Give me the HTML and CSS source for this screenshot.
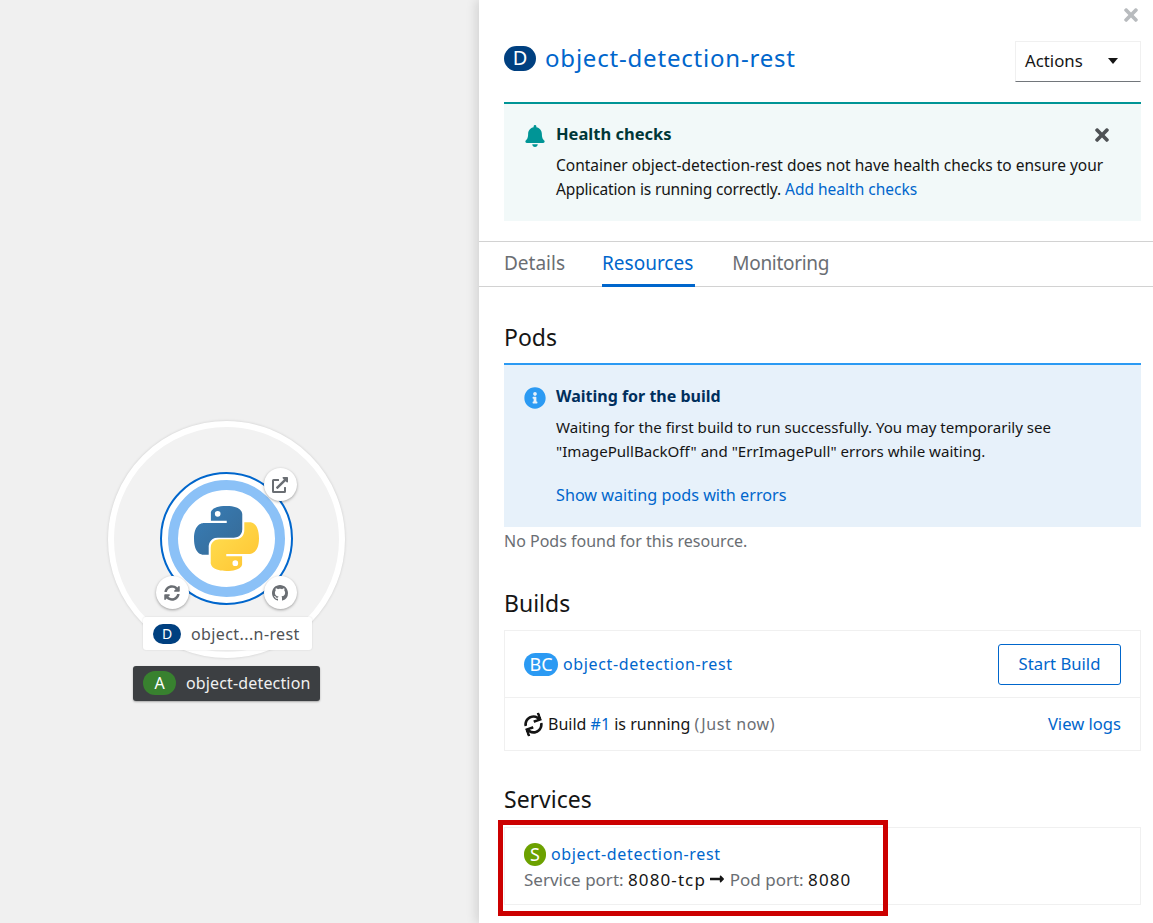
FILE: index.html
```html
<!DOCTYPE html>
<html lang="en">
<head>
    <meta charset="UTF-8">
    <title>object-detection-rest</title>
    <link rel="stylesheet" href="styles.css">
</head>
<body>
    <svg class="defs" width="0" height="0">
        <defs>
            <linearGradient id="pyBlue" x1="0" y1="0" x2="1" y2="1">
                <stop offset="0" stop-color="#387eb8"/>
                <stop offset="1" stop-color="#366994"/>
            </linearGradient>
            <linearGradient id="pyYellow" x1="1" y1="1" x2="0" y2="0">
                <stop offset="0" stop-color="#ffe052"/>
                <stop offset="1" stop-color="#ffc331"/>
            </linearGradient>
        </defs>
    </svg>

    <div class="canvas">
        <div class="group-ring"></div>
        <div class="node-ring"></div>
        <div class="node-inner">
            <svg class="python" viewBox="0 0 110 110">
                <path fill="url(#pyBlue)" d="M54.9 0C26.8 0 28.6 12.2 28.6 12.2l0 12.6h26.8v3.8H17.9S0 26.6 0 55c0 28.4 15.6 27.4 15.6 27.4h9.3V69.2s-.5-15.6 15.4-15.6h26.5s14.9.2 14.9-14.4V15S84 0 54.9 0zM40.1 8.5a4.8 4.8 0 110 9.6 4.8 4.8 0 010-9.6z"/>
                <path fill="url(#pyYellow)" transform="rotate(180 55 55)" d="M54.9 0C26.8 0 28.6 12.2 28.6 12.2l0 12.6h26.8v3.8H17.9S0 26.6 0 55c0 28.4 15.6 27.4 15.6 27.4h9.3V69.2s-.5-15.6 15.4-15.6h26.5s14.9.2 14.9-14.4V15S84 0 54.9 0zM40.1 8.5a4.8 4.8 0 110 9.6 4.8 4.8 0 010-9.6z"/>
            </svg>
        </div>
        <div class="deco deco-link">
            <svg viewBox="0 0 512 512"><path d="M432,320H400a16,16,0,0,0-16,16V448H64V128H208a16,16,0,0,0,16-16V80a16,16,0,0,0-16-16H48A48,48,0,0,0,0,112V464a48,48,0,0,0,48,48H400a48,48,0,0,0,48-48V336A16,16,0,0,0,432,320ZM488,0h-128c-21.37,0-32.05,25.91-17,41l35.73,35.73L135,320.37a24,24,0,0,0,0,34L157.67,377a24,24,0,0,0,34,0L435.28,133.32,471,169c15,15,41,4.5,41-17V24A24,24,0,0,0,488,0Z"/></svg>
        </div>
        <div class="deco deco-sync">
            <svg viewBox="0 0 512 512"><path d="M370.72 133.28C339.458 104.008 298.888 87.962 255.848 88c-77.458.068-144.328 53.178-162.791 126.85-1.344 5.363-6.122 9.15-11.651 9.15H24.103c-7.498 0-13.194-6.807-11.807-14.176C33.933 94.924 134.813 8 256 8c66.448 0 126.791 26.136 171.315 68.685L463.03 40.97C478.149 25.851 504 36.559 504 57.941V192c0 13.255-10.745 24-24 24H345.941c-21.382 0-32.09-25.851-16.971-40.971l41.75-41.749zM32 296h134.059c21.382 0 32.09 25.851 16.971 40.971l-41.75 41.75c31.262 29.273 71.835 45.319 114.876 45.28 77.418-.07 144.315-53.144 162.787-126.849 1.344-5.363 6.122-9.15 11.651-9.15h57.304c7.498 0 13.194 6.807 11.807 14.176C478.067 417.076 377.187 504 256 504c-66.448 0-126.791-26.136-171.315-68.685L48.97 471.03C33.851 486.149 8 475.441 8 454.059V320c0-13.255 10.745-24 24-24z"/></svg>
        </div>
        <div class="deco deco-git">
            <svg viewBox="0 0 16 16"><path d="M8 0C3.58 0 0 3.58 0 8c0 3.54 2.29 6.53 5.47 7.59.4.07.55-.17.55-.38 0-.19-.01-.82-.01-1.49-2.01.37-2.53-.49-2.69-.94-.09-.23-.48-.94-.82-1.13-.28-.15-.68-.52-.01-.53.63-.01 1.08.58 1.23.82.72 1.21 1.87.87 2.33.66.07-.52.28-.87.51-1.07-1.78-.2-3.64-.89-3.64-3.95 0-.87.31-1.59.82-2.15-.08-.2-.36-1.02.08-2.12 0 0 .67-.21 2.2.82.64-.18 1.32-.27 2-.27.68 0 1.36.09 2 .27 1.53-1.04 2.2-.82 2.2-.82.44 1.1.16 1.92.08 2.12.51.56.82 1.27.82 2.15 0 3.07-1.87 3.75-3.65 3.95.29.25.54.73.54 1.48 0 1.07-.01 1.93-.01 2.2 0 .21.15.46.55.38A8.013 8.013 0 0016 8c0-4.42-3.58-8-8-8z"/></svg>
        </div>
        <div class="node-label">
            <span class="pill pill-d">D</span>
            <span>object...n-rest</span>
        </div>
        <div class="group-label">
            <span class="pill pill-a">A</span>
            <span>object-detection</span>
        </div>
    </div>

    <div class="panel">
        <svg class="panel-close" viewBox="0 0 352 512"><path d="M242.72 256l100.07-100.07c12.28-12.28 12.28-32.19 0-44.48l-22.24-22.24c-12.28-12.28-32.19-12.28-44.48 0L176 189.28 75.93 89.21c-12.28-12.28-32.19-12.28-44.48 0L9.21 111.45c-12.28 12.28-12.28 32.19 0 44.48L109.28 256 9.21 356.07c-12.28 12.28-12.28 32.19 0 44.48l22.24 22.24c12.28 12.28 32.2 12.28 44.48 0L176 322.72l100.07 100.07c12.28 12.28 32.2 12.28 44.48 0l22.24-22.24c12.28-12.28 12.28-32.19 0-44.48L242.72 256z"/></svg>

        <div class="head">
            <h1><span class="badge badge-d">D</span><a href="#">object-detection-rest</a></h1>
            <div class="actions">Actions<span class="caret"></span></div>
        </div>

        <div class="alert alert-health">
            <svg class="alert-icon" viewBox="0 0 448 512"><path d="M224 512c35.32 0 63.97-28.65 63.97-64H160.03c0 35.35 28.65 64 63.97 64zm215.39-149.71c-19.32-20.76-55.47-51.99-55.47-154.29 0-77.7-54.48-139.9-127.94-155.16V32c0-17.67-14.32-32-31.98-32s-31.98 14.33-31.98 32v20.84C118.56 68.1 64.08 130.3 64.08 208c0 102.3-36.15 133.53-55.47 154.29-6 6.45-8.66 14.16-8.61 21.71.11 16.4 12.98 32 32.1 32h383.8c19.12 0 32-15.6 32.1-32 .05-7.55-2.61-15.27-8.61-21.71z"/></svg>
            <div class="alert-body">
                <h4>Health checks</h4>
                <p>Container object-detection-rest does not have health checks to ensure your <span class="tight">Application is running correctly.</span> <a href="#">Add health checks</a></p>
            </div>
            <svg class="alert-close" viewBox="0 0 352 512"><path d="M242.72 256l100.07-100.07c12.28-12.28 12.28-32.19 0-44.48l-22.24-22.24c-12.28-12.28-32.19-12.28-44.48 0L176 189.28 75.93 89.21c-12.28-12.28-32.19-12.28-44.48 0L9.21 111.45c-12.28 12.28-12.28 32.19 0 44.48L109.28 256 9.21 356.07c-12.28 12.28-12.28 32.19 0 44.48l22.24 22.24c12.28 12.28 32.2 12.28 44.48 0L176 322.72l100.07 100.07c12.28 12.28 32.2 12.28 44.48 0l22.24-22.24c12.28-12.28 12.28-32.19 0-44.48L242.72 256z"/></svg>
        </div>

        <div class="tabs">
            <span class="tab">Details</span>
            <span class="tab tab-active">Resources</span>
            <span class="tab">Monitoring</span>
        </div>

        <div class="content">
            <h2 class="pods-title">Pods</h2>
            <div class="alert alert-info">
                <svg class="alert-icon" viewBox="0 0 512 512"><path d="M256 8C119.043 8 8 119.083 8 256c0 136.997 111.043 248 248 248s248-111.003 248-248C504 119.083 392.957 8 256 8zm0 110c23.196 0 42 18.804 42 42s-18.804 42-42 42-42-18.804-42-42 18.804-42 42-42zm56 254c0 6.627-5.373 12-12 12h-88c-6.627 0-12-5.373-12-12v-24c0-6.627 5.373-12 12-12h12v-64h-12c-6.627 0-12-5.373-12-12v-24c0-6.627 5.373-12 12-12h64c6.627 0 12 5.373 12 12v100h12c6.627 0 12 5.373 12 12v24z"/></svg>
                <div class="alert-body">
                    <h4>Waiting for the build</h4>
                    <p>Waiting for the first build to run successfully. You may temporarily see "ImagePullBackOff" and "ErrImagePull" errors while waiting.</p>
                    <p class="alert-link"><a href="#">Show waiting pods with errors</a></p>
                </div>
            </div>
            <p class="empty">No Pods found for this resource.</p>

            <h2 class="builds-title">Builds</h2>
            <div class="card">
                <div class="row row-bc">
                    <span class="res"><span class="badge-sm badge-bc">BC</span><a class="res-link" href="#">object-detection-rest</a></span>
                    <span class="btn">Start Build</span>
                </div>
                <div class="row row-log">
                    <span class="res">
                        <svg class="spin" viewBox="0 0 512 512"><path d="M440.65 12.57l4 82.77A247.16 247.16 0 0 0 255.83 8C134.73 8 33.91 94.92 12.29 209.82A12 12 0 0 0 24.09 224h49.05a12 12 0 0 0 11.67-9.26 175.91 175.91 0 0 1 317-56.94l-101.46-4.86a12 12 0 0 0-12.57 12v47.41a12 12 0 0 0 12 12H500a12 12 0 0 0 12-12V12a12 12 0 0 0-12-12h-47.37a12 12 0 0 0-11.98 12.57zM255.83 432a175.61 175.61 0 0 1-146-77.8l101.8 4.87a12 12 0 0 0 12.57-12v-47.4a12 12 0 0 0-12-12H12a12 12 0 0 0-12 12V500a12 12 0 0 0 12 12h47.35a12 12 0 0 0 12-12.6l-4.15-82.57A247.17 247.17 0 0 0 255.83 504c121.11 0 221.93-86.92 243.55-201.82a12 12 0 0 0-11.8-14.18h-49.05a12 12 0 0 0-11.67 9.26A175.86 175.86 0 0 1 255.83 432z"/></svg>
                        <span>Build <a href="#">#1</a> is running <span class="muted just-now">(Just now)</span></span>
                    </span>
                    <a class="logs" href="#">View logs</a>
                </div>
            </div>

            <h2 class="services-title">Services</h2>
            <div class="card service-card">
                <div class="res"><span class="badge-sm badge-s">S</span><a class="res-link" href="#">object-detection-rest</a></div>
                <div class="ports">
                    <span class="muted">Service port:</span> <span class="num">8080-tcp</span>
                    <svg class="arrow" viewBox="0 0 448 512"><path d="M313.941 216H12c-6.627 0-12 5.373-12 12v56c0 6.627 5.373 12 12 12h301.941v46.059c0 21.382 25.851 32.09 40.971 16.971l86.059-86.059c9.373-9.373 9.373-24.569 0-33.941l-86.059-86.059c-15.119-15.119-40.971-4.411-40.971 16.971V216z"/></svg>
                    <span class="muted">Pod port:</span> <span class="num">8080</span>
                </div>
            </div>
        </div>

        <div class="highlight"></div>
    </div>
</body>
</html>
```

FILE: styles.css
```css
html, body {
    margin: 0;
    padding: 0;
    height: 100%;
}
body {
    display: flex;
    height: 923px;
    overflow: hidden;
    font-family: "Noto Sans", sans-serif;
    font-size: 16px;
    color: #151515;
    background-color: #fff;
}
a {
    color: #06c;
    text-decoration: none;
}
.defs {
    position: absolute;
}

/* topology canvas */
.canvas {
    position: relative;
    width: 479px;
    flex: none;
    background-color: #f0f0f0;
}
.group-ring {
    position: absolute;
    left: 108px;
    top: 421px;
    width: 225px;
    height: 225px;
    border: 6px solid #fff;
    border-radius: 50%;
    box-shadow: 0 0 3px rgba(0, 0, 0, 0.15);
    background-color: #f2f2f2;
}
.node-ring {
    position: absolute;
    left: 160px;
    top: 472px;
    width: 129px;
    height: 129px;
    border: 2px solid #06c;
    border-radius: 50%;
    background-color: #fff;
}
.node-inner {
    position: absolute;
    left: 168px;
    top: 480px;
    width: 97px;
    height: 97px;
    border: 10px solid #8bc1f7;
    border-radius: 50%;
    background-color: #fff;
    display: flex;
    justify-content: center;
    align-items: center;
}
.python {
    width: 65px;
    height: 65px;
}
.deco {
    position: absolute;
    box-sizing: border-box;
    width: 33px;
    height: 33px;
    padding-right: 1px;
    border-radius: 50%;
    background-color: #fff;
    box-shadow: 0 1px 3px rgba(0, 0, 0, 0.35);
    display: flex;
    justify-content: center;
    align-items: center;
}
.deco svg {
    width: 16px;
    height: 16px;
    fill: #6a6e73;
}
.deco-link {
    left: 264px;
    top: 468px;
}
.deco-sync {
    left: 156px;
    top: 576px;
}
.deco-git {
    left: 264px;
    top: 576px;
}
.node-label,
.group-label {
    position: absolute;
    display: flex;
    align-items: center;
    border-radius: 3px;
    font-size: 16px;
    box-sizing: border-box;
}
.node-label {
    left: 143px;
    top: 617px;
    width: 169px;
    height: 33px;
    padding-left: 10px;
    gap: 10px;
    background-color: #fff;
    color: #4f5255;
    letter-spacing: 0.4px;
    box-shadow: 0 0 2px rgba(0, 0, 0, 0.12);
}
.group-label {
    left: 133px;
    top: 666px;
    width: 187px;
    height: 35px;
    padding-left: 10px;
    padding-bottom: 1px;
    gap: 10px;
    background-color: #3c3f42;
    color: #f0f0f0;
    letter-spacing: 0.15px;
    box-shadow: 0 1px 2px rgba(0, 0, 0, 0.3);
}
.pill {
    display: inline-flex;
    justify-content: center;
    align-items: center;
    border-radius: 12px;
    color: #fff;
    letter-spacing: 0;
}
.pill-d {
    width: 28px;
    height: 20px;
    background-color: #004080;
    font-size: 14px;
}
.pill-a {
    width: 33px;
    height: 24px;
    background-color: #38812f;
}

/* side panel */
.panel {
    position: relative;
    flex: 1;
    min-width: 0;
    background-color: #fff;
    box-shadow: -3px 0 10px rgba(0, 0, 0, 0.12);
}
.panel-close {
    position: absolute;
    right: 14px;
    top: 5px;
    width: 16px;
    height: 20px;
    fill: #b8bbbe;
}
.head {
    display: flex;
    justify-content: space-between;
    align-items: flex-start;
    padding: 41px 12px 0 25px;
    height: 61px;
}
h1 {
    display: flex;
    align-items: center;
    margin: 0;
    padding-top: 2px;
    font-size: 24px;
    font-weight: 400;
    line-height: 30px;
    letter-spacing: 0.8px;
}
.badge {
    display: inline-flex;
    justify-content: center;
    align-items: center;
    width: 32px;
    height: 25px;
    margin-right: 9px;
    border-radius: 13px;
    color: #fff;
    font-size: 20px;
    letter-spacing: 0;
}
.badge-d {
    background-color: #004080;
}
.actions {
    display: flex;
    justify-content: space-between;
    align-items: center;
    box-sizing: border-box;
    width: 126px;
    height: 41px;
    padding: 0 22px 2px 9px;
    border: 1px solid #f0f0f0;
    border-bottom-color: #72767b;
    font-size: 16.8px;
}
.caret {
    width: 0;
    height: 0;
    border-left: 5px solid transparent;
    border-right: 5px solid transparent;
    border-top: 6px solid #151515;
}
.alert {
    display: flex;
    box-sizing: border-box;
    border-top: 2px solid;
    padding: 18px 20px 20px;
    margin-right: 12px;
}
.alert-health {
    height: 119px;
    margin-left: 25px;
    border-top-color: #009596;
    background-color: #f2f9f9;
}
.alert-info {
    height: 164px;
    padding-top: 19px;
    border-top-color: #2b9af3;
    background-color: #e7f1fa;
    margin-right: 0;
}
.alert-icon {
    flex: none;
    width: 22px;
    height: 22px;
    margin-right: 10px;
    margin-top: 3px;
}
.alert-health .alert-icon {
    fill: #009596;
}
.alert-info .alert-icon {
    fill: #2b9af3;
}
.alert-body {
    flex: 1;
}
.alert h4 {
    margin: 0 0 7px;
    font-size: 16px;
    font-weight: 700;
    line-height: 24px;
}
.alert-health h4 {
    font-size: 16.5px;
    color: #003737;
}
.alert-info h4 {
    color: #002f5d;
}
.alert p {
    margin: 0;
    line-height: 24px;
    font-size: 15.1px;
}
.alert-health p {
    font-size: 15.5px;
}
.tight {
    letter-spacing: -0.15px;
}
.alert p.alert-link {
    margin-top: 20px;
    font-size: 16.2px;
}
.alert-close {
    flex: none;
    width: 14px;
    height: 20px;
    margin: 3px 12px 0 -26px;
    fill: #4f5255;
}
.tabs {
    display: flex;
    gap: 37px;
    height: 44px;
    margin-top: 20px;
    padding-left: 25px;
    border-top: 1px solid #d2d2d2;
    border-bottom: 1px solid #d2d2d2;
}
.tab {
    display: flex;
    align-items: center;
    box-sizing: border-box;
    height: 45px;
    padding-bottom: 3px;
    font-size: 19px;
    color: #6a6e73;
}
.tab:last-child {
    letter-spacing: -0.3px;
}
.tab-active {
    padding: 0 2px 1px 0;
    color: #06c;
    border-bottom: 3px solid #06c;
}
.content {
    padding: 0 12px 0 25px;
}
h2 {
    margin: 0;
    font-size: 23px;
    font-weight: 400;
    line-height: 30px;
}
.pods-title {
    padding-top: 35px;
    padding-bottom: 11px;
}
.empty {
    margin: 2px 0 0;
    line-height: 24px;
    color: #6a6e73;
}
.builds-title {
    padding-top: 35px;
    padding-bottom: 12px;
}
.card {
    border: 1px solid #f0f0f0;
}
.row {
    display: flex;
    justify-content: space-between;
    align-items: center;
    padding: 0 19px;
}
.row-bc {
    height: 66px;
    border-bottom: 1px solid #f0f0f0;
}
.row-log {
    height: 52px;
}
.res {
    display: flex;
    align-items: center;
}
.res-link {
    letter-spacing: 0.65px;
}
.badge-sm {
    display: inline-flex;
    justify-content: center;
    align-items: center;
    height: 23px;
    border-radius: 12px;
    color: #fff;
    margin-right: 5px;
    font-size: 18px;
}
.badge-bc {
    width: 34px;
    background-color: #2b9af3;
}
.badge-s {
    width: 22px;
    background-color: #6ca100;
}
.btn {
    display: flex;
    align-items: center;
    justify-content: center;
    box-sizing: border-box;
    width: 123px;
    height: 41px;
    padding-bottom: 2px;
    border: 1px solid #06c;
    border-radius: 3px;
    color: #06c;
    font-size: 16.7px;
}
.logs {
    font-size: 16.6px;
    padding-bottom: 2px;
}
.spin {
    width: 19px;
    height: 19px;
    margin-right: 5px;
    transform: rotate(-20deg);
    fill: #151515;
}
.muted {
    color: #6a6e73;
}
.just-now {
    letter-spacing: 0.6px;
}
.services-title {
    padding-top: 33px;
    padding-bottom: 13px;
}
.service-card {
    height: 78px;
    box-sizing: border-box;
    padding: 13px 19px 0;
    line-height: 26px;
}
.ports {
    line-height: 26px;
    white-space: nowrap;
    font-size: 17px;
}
.num {
    letter-spacing: 1.1px;
}
.arrow {
    width: 16px;
    height: 16px;
    margin-left: -1px;
    vertical-align: -1px;
    fill: #151515;
}

/* red callout added on top of the screenshot */
.highlight {
    position: absolute;
    left: 19px;
    top: 820px;
    width: 390px;
    height: 96px;
    box-sizing: border-box;
    border: 5px solid #c00;
}
```
